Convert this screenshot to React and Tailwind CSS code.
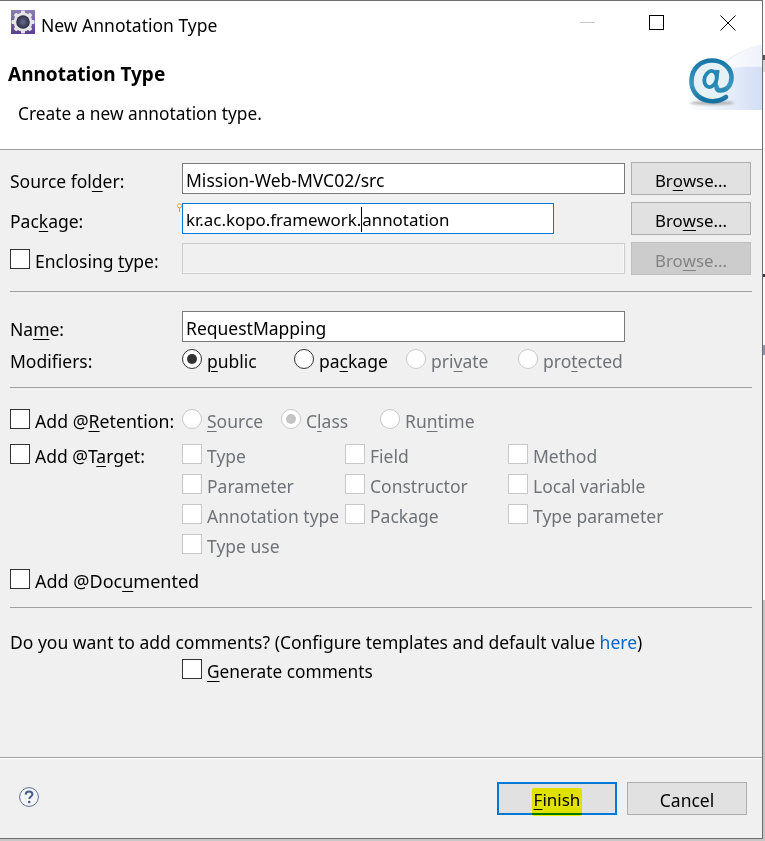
import React from "react";

const U = ({ children }) => <span className="underline decoration-1 underline-offset-[3px]">{children}</span>;

const Sep = ({ className = "" }) => <div className={"h-px w-[742px] bg-[#a0a0a0] " + className} />;

const Input = ({ value, focus, className = "" }) => (
  <div
    className={
      "flex h-[31px] items-center border bg-white pt-[2px] pl-[3px] text-black " +
      (focus ? "border-[#0078d7] " : "border-[#7a7a7a] ") +
      className
    }
  >
    {value}
  </div>
);

const Btn = ({ children, disabled, focus, className = "" }) => (
  <div
    className={
      "flex h-[33px] w-[120px] items-center justify-center " +
      (focus
        ? "border-2 border-[#0078d7] bg-[#e1e1e1] text-black "
        : disabled
          ? "border border-[#bfbfbf] bg-[#cccccc] text-[#838383] "
          : "border border-[#adadad] bg-[#e1e1e1] text-black ") +
      className
    }
  >
    {children}
  </div>
);

const Check = ({ label, disabled, className = "" }) => (
  <div className={"flex h-5 items-center " + className}>
    <div className={"box-border size-5 shrink-0 border bg-white " + (disabled ? "border-[#c8c8c8]" : "border-[#333333]")} />
    <div className={"ml-[5px] whitespace-nowrap pt-1 " + (disabled ? "text-[#6f7378]" : "text-black")}>{label}</div>
  </div>
);

const Radio = ({ label, disabled, on, className = "" }) => (
  <div className={"flex h-5 items-center " + className}>
    <div
      className={
        "box-border flex size-5 shrink-0 items-center justify-center rounded-full border bg-white " +
        (disabled ? "border-[#c8c8c8]" : "border-[#333333]")
      }
    >
      {on && <div className={"size-[10px] rounded-full " + (disabled ? "bg-[#c4c4c4]" : "bg-[#333333]")} />}
    </div>
    <div className={"ml-[5px] whitespace-nowrap pt-1 " + (disabled ? "text-[#6f7378]" : "text-black")}>{label}</div>
  </div>
);

const GearIcon = () => (
  <svg width="24" height="24" viewBox="0 0 24 24" className="mt-[9px] ml-[11px] shrink-0">
    <defs>
      <linearGradient id="gbg" x1="0" y1="0" x2="0" y2="1">
        <stop offset="0" stopColor="#8a7fb5" />
        <stop offset="1" stopColor="#5b3f8e" />
      </linearGradient>
      <radialGradient id="gc" cx="0.5" cy="0.5" r="0.5">
        <stop offset="0" stopColor="#6a6a92" />
        <stop offset="1" stopColor="#2c2c44" />
      </radialGradient>
    </defs>
    <rect width="24" height="24" fill="url(#gbg)" />
    <g fill="#e6e6e6">
      <circle cx="12" cy="12" r="9.4" />
      {[0, 45, 90, 135, 180, 225, 270, 315].map((a) => (
        <rect key={a} x="10" y="0.5" width="4" height="4" rx="1" transform={`rotate(${a} 12 12)`} />
      ))}
    </g>
    <circle cx="12" cy="12" r="6.8" fill="url(#gc)" />
  </svg>
);

const Banner = () => (
  <svg width="75" height="65" viewBox="0 0 75 65" className="shrink-0">
    <defs>
      <linearGradient id="bb" x1="0" y1="0" x2="1" y2="0">
        <stop offset="0" stopColor="#ffffff" />
        <stop offset="1" stopColor="#d3def5" />
      </linearGradient>
      <linearGradient id="bt" x1="0" y1="0" x2="1" y2="0">
        <stop offset="0" stopColor="#ffffff" />
        <stop offset="1" stopColor="#eef2fb" />
      </linearGradient>
      <linearGradient id="at" x1="0" y1="0" x2="0" y2="1">
        <stop offset="0" stopColor="#1877a8" />
        <stop offset="0.6" stopColor="#3b97c0" />
        <stop offset="1" stopColor="#14709f" />
      </linearGradient>
      <filter id="sh" x="-30%" y="-100%" width="160%" height="300%">
        <feGaussianBlur stdDeviation="1.2" />
      </filter>
    </defs>
    <path d="M0 65 C12 35 40 6 75 0 V65 Z" fill="url(#bb)" />
    <path d="M30 28 C42 22 58 21 75 22 V0 C56 3 42 13 30 28 Z" fill="url(#bt)" />
    <ellipse cx="25" cy="58" rx="22" ry="2.2" fill="#9a9a9a" opacity="0.7" filter="url(#sh)" />
    <circle cx="24.5" cy="36" r="19" fill="#e6f1f6" />
    <path
      d="M39 52 C33 56 26 57 20 55.5 C9 53 4 44 4.5 35 C5 23 14 15.5 25 15.5 C36 15.5 44.5 23 44.5 32.5 C44.5 40 40 45.5 33.5 45.5 C31 45.5 29.5 44 29.5 41.5"
      fill="none"
      stroke="url(#at)"
      strokeWidth="4.6"
      strokeLinecap="round"
    />
    <path d="M30.5 25 L28 41" fill="none" stroke="#2687b4" strokeWidth="4.4" />
    <ellipse cx="23.5" cy="34" rx="6" ry="8.2" transform="rotate(18 23.5 34)" fill="#e6f1f6" stroke="#2687b4" strokeWidth="3.8" />
  </svg>
);

export default function App() {
  return (
    <div className="relative h-[841px] w-[765px] overflow-hidden bg-[#fafafa] font-['Noto_Sans',sans-serif] text-[17.5px] leading-6">
      <div className="relative z-10 flex h-[839px] w-[763px] flex-col border-t border-r border-b border-[#6e6e6e] bg-[#f0f0f0]">
        {/* title bar */}
        <div className="flex h-[44px] shrink-0 bg-white">
          <GearIcon />
          <div className="mt-3 ml-[6px] text-black">New Annotation Type</div>
          <div className="ml-auto flex items-start">
            <svg width="15" height="1" className="mt-[21px]"><rect width="15" height="1" fill="#c8c8c8" /></svg>
            <svg width="15" height="15" className="mt-[14px] ml-[54px]"><rect x="0.5" y="0.5" width="14" height="14" fill="none" stroke="#000" /></svg>
            <svg width="16" height="16" className="mt-[14px] mr-[26px] ml-[56px]"><path d="M0.5 0.5 L15.5 15.5 M15.5 0.5 L0.5 15.5" stroke="#000" /></svg>
          </div>
        </div>
        {/* header */}
        <div className="flex h-[105px] shrink-0 justify-between border-b border-[#a0a0a0] bg-white">
          <div className="text-black">
            <div className="mt-[17px] ml-2 text-[19px] font-bold">Annotation Type</div>
            <div className="mt-4 ml-[18px] text-[17.3px]">Create a new annotation type.</div>
          </div>
          <Banner />
        </div>
        {/* form */}
        <div className="flex flex-1 flex-col pt-3 pl-[10px] text-black">
          <div className="grid grid-cols-[172px_449px_120px] grid-rows-[33px_33px_33px] items-center gap-y-[7px]">
            <div className="pt-1">Source fol<U>d</U>er:</div>
            <Input value="Mission-Web-MVC02/src" className="w-[443px]" />
            <Btn className="pt-1 text-[16.8px]">Br<U>o</U>wse...</Btn>
            <div className="pt-1">Pac<U>k</U>age:</div>
            <div className="relative">
              <Input
                focus
                className="w-[372px] text-[16.9px]"
                value={
                  <>
                    kr.ac.kopo.framework.
                    <span className="inline-block h-[25px] w-0 border-l border-black align-middle" />
                    annotation
                  </>
                }
              />
              <svg width="5" height="9" className="absolute top-[0px] left-[-5px]">
                <circle cx="2.5" cy="2.8" r="2" fill="#fff" stroke="#e8952c" strokeWidth="1" />
                <path d="M2.5 5 V9" stroke="#e8952c" />
              </svg>
            </div>
            <Btn className="pt-1 text-[16.8px]">Bro<U>w</U>se...</Btn>
            <Check label={<>Enclosing <U>t</U>ype:</>} />
            <div className="h-[31px] w-[443px] border border-[#cccccc] bg-[#f0f0f0] shadow-[inset_-1px_-1px_0_#fafafa]" />
            <Btn disabled className="pt-1 text-[16.8px]">Bro<U>w</U>se...</Btn>
          </div>

          <Sep className="mt-4" />

          <div className="mt-[19px] flex items-center">
            <div className="w-[172px] pt-1">Na<U>m</U>e:</div>
            <Input value="RequestMapping" className="w-[443px]" />
          </div>

          <div className="mt-[7px] flex h-5 items-center">
            <div className="w-[172px] pt-1">Modifiers:</div>
            <Radio on label={<><U>p</U>ublic</>} className="w-[112px]" />
            <Radio label={<>pa<U>c</U>kage</>} className="w-[112px]" />
            <Radio disabled label={<>pri<U>v</U>ate</>} className="w-[112px]" />
            <Radio disabled label={<>pro<U>t</U>ected</>} />
          </div>

          <Sep className="mt-[18px]" />

          <div className="mt-[21px] flex h-5 items-center">
            <Check label={<span className="text-[17.7px]">Add @<U>R</U>etention:</span>} className="w-[172px]" />
            <Radio disabled label={<><U>S</U>ource</>} className="w-[99px]" />
            <Radio disabled on label={<>C<U>l</U>ass</>} className="w-[99px]" />
            <Radio disabled label={<>Ru<U>n</U>time</>} />
          </div>

          <div className="mt-[15px] flex">
            <Check label={<>Add @T<U>a</U>rget:</>} className="w-[172px]" />
            <div className="grid grid-cols-[163px_163px_auto] grid-rows-[20px_20px_20px_20px] gap-y-[10px]">
              <Check disabled label="Type" />
              <Check disabled label="Field" />
              <Check disabled label="Method" />
              <Check disabled label="Parameter" />
              <Check disabled label="Constructor" />
              <Check disabled label="Local variable" />
              <Check disabled label="Annotation type" />
              <Check disabled label="Package" />
              <Check disabled label="Type parameter" />
              <Check disabled label="Type use" />
            </div>
          </div>

          <Check label={<span className="text-[18px]">Add @Doc<U>u</U>mented</span>} className="mt-[15px]" />

          <Sep className="mt-[18px]" />

          <div className="mt-[22px] whitespace-nowrap">
            Do you want to add comments? (Configure templates and default value <span className="text-[#0066cc]">here</span>)
          </div>
          <Check label={<span className="text-[17.3px]"><U>G</U>enerate comments</span>} className="mt-[5px] ml-[172px]" />
        </div>
        {/* footer */}
        <div className="relative flex h-[81px] shrink-0 items-start border-t border-[#a0a0a0] pl-[19px] shadow-[inset_0_1px_0_#ffffff]">
          <svg width="20" height="20" viewBox="0 0 20 20" className="mt-[29px]">
            <circle cx="10" cy="10" r="9.4" fill="#f4f5f8" stroke="#5c6d96" strokeWidth="1" />
            <path d="M6.7 7.6 C6.8 5.4 8.3 4.4 10.1 4.4 C12 4.4 13.4 5.5 13.4 7.2 C13.4 9.3 10.3 9.6 10.3 12" fill="none" stroke="#465a88" strokeWidth="2" />
            <circle cx="10.2" cy="15" r="1.3" fill="#465a88" />
          </svg>
          <div className="mt-6 ml-[458px] flex gap-[10px] text-black">
            <Btn focus className="pt-[2px] text-[17px]"><U>F</U>inish</Btn>
            <Btn className="pt-[2px]">Cancel</Btn>
          </div>
          <div className="absolute top-[30px] left-[532px] h-[28px] w-[50px] rounded-[2px] bg-[#ffff00] mix-blend-multiply" />
        </div>
      </div>
      {/* what shows of the desktop behind the window */}
      <div className="absolute top-[600px] right-0 bottom-0 w-[2px] bg-[#c4c4c4]" />
      <div className="absolute right-0 bottom-0 left-0 h-[2px] bg-[#c8c8c8]" />
      <div className="absolute top-[55px] right-0 h-[5px] w-[2px] bg-[#555555]" />
      <div className="absolute top-[60px] right-0 h-[12px] w-[2px] bg-[#d8d8d8]" />
      <div className="absolute top-[274px] right-0 h-[3px] w-[2px] bg-[#333344]" />
      <div className="absolute top-[345px] right-0 h-[10px] w-[2px] bg-[#8a93a8]" />
    </div>
  );
}
